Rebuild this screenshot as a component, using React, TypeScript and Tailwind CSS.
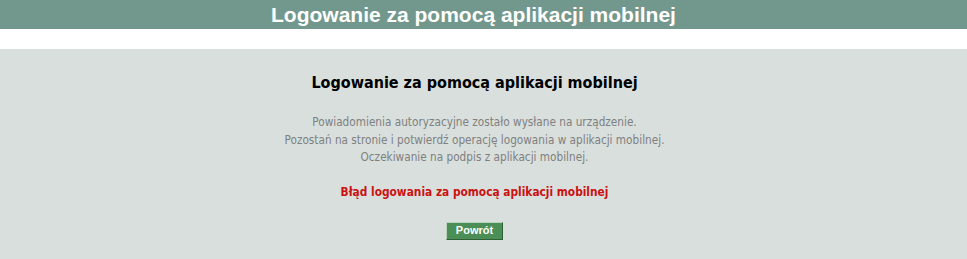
export default function App() {
  return (
    <div className="min-h-[259px] bg-white flex flex-col">
      {/* Pasek tytułu */}
      <div className="h-[29px] bg-[#72988e] flex items-center justify-center pr-[20px]">
        <h1 className="text-white font-bold text-[21px] leading-none font-['Liberation_Sans',Arial,sans-serif]">
          Logowanie za pomocą aplikacji mobilnej
        </h1>
      </div>

      <div className="h-[20px]" />

      {/* Panel */}
      <div className="flex-1 bg-[#d8dfdd] flex flex-col items-center pt-[22px] pb-[14px] pr-[18px] font-['DejaVu_Sans_Condensed','DejaVu_Sans',sans-serif]">
        <h2 className="text-black font-bold text-[16px] leading-[24px]">
          Logowanie za pomocą aplikacji mobilnej
        </h2>

        <div className="mt-[19px] text-center text-[#808080] text-[11.7px] leading-[17.5px]">
          <p>Powiadomienia autoryzacyjne zostało wysłane na urządzenie.</p>
          <p>Pozostań na stronie i potwierdź operację logowania w aplikacji mobilnej.</p>
          <p>Oczekiwanie na podpis z aplikacji mobilnej.</p>
        </div>

        <p className="mt-[17px] text-[#cc1111] font-bold text-[11.8px] leading-[17px]">
          Błąd logowania za pomocą aplikacji mobilnej
        </p>

        <button
          type="button"
          className="mt-[21px] w-[57px] h-[18px] bg-[#4b8f56] text-white font-bold text-[11px] leading-none font-['Liberation_Sans',Arial,sans-serif] border border-t-[#b9d3bd] border-l-[#b9d3bd] border-b-[#2f5f37] border-r-[#2f5f37]"
        >
          Powrót
        </button>
      </div>
    </div>
  );
}
